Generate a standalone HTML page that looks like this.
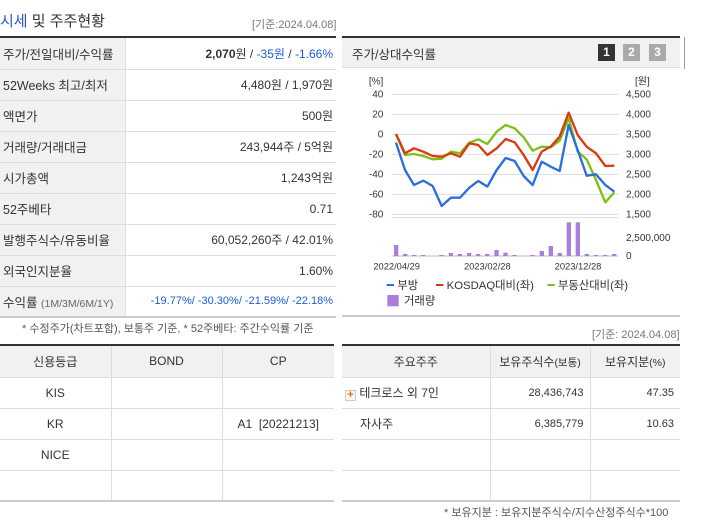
<!DOCTYPE html>
<html><head><meta charset="utf-8"><style>
*{margin:0;padding:0;box-sizing:border-box}
body{width:702px;height:525px;background:#fff;font-family:"Liberation Sans","Noto Sans CJK KR",sans-serif;font-size:12px;color:#333;position:relative;overflow:hidden}
.a{position:absolute}
table{border-collapse:collapse;position:absolute;table-layout:fixed}
td{height:31px;border-bottom:1px solid #ddd;white-space:nowrap}
.st td.l{background:#f1f1f1;border-right:1px solid #ddd;padding-left:3px;font-size:12.5px;color:#333}
.st td.v{text-align:right;padding-right:3px}
.b{color:#1a5ed8}
.g td{border-right:1px solid #ddd;text-align:center}
.g td:last-child{border-right:none}
.g tr.h td{background:#f1f1f1}
</style></head><body>
<div class="a" style="left:0;top:10px;font-size:15px;color:#333"><span style="color:#2a56c6">시세</span> 및 주주현황</div>
<div class="a" style="left:252px;top:16px;font-size:11px;color:#777">[기준:2024.04.08]</div>
<div class="a" style="left:0;top:36px;width:336px;height:2px;background:#333"></div>
<table class="st" style="left:0;top:38px;width:336px">
<col style="width:125px"><col>
<tr><td class="l">주가/전일대비/수익률</td><td class="v"><b>2,070</b>원 / <span class="b">-35원</span> / <span class="b">-1.66%</span></td></tr>
<tr><td class="l">52Weeks 최고/최저</td><td class="v">4,480원 / 1,970원</td></tr>
<tr><td class="l">액면가</td><td class="v">500원</td></tr>
<tr><td class="l">거래량/거래대금</td><td class="v">243,944주 / 5억원</td></tr>
<tr><td class="l">시가총액</td><td class="v">1,243억원</td></tr>
<tr><td class="l">52주베타</td><td class="v">0.71</td></tr>
<tr><td class="l">발행주식수/유동비율</td><td class="v">60,052,260주 / 42.01%</td></tr>
<tr><td class="l">외국인지분율</td><td class="v">1.60%</td></tr>
<tr><td class="l" style="border-bottom:2px solid #ccc">수익률 <span style="font-size:10.5px;color:#666">(1M/3M/6M/1Y)</span></td><td class="v b" style="border-bottom:2px solid #ccc;font-size:11px">-19.77%/ -30.30%/ -21.59%/ -22.18%</td></tr>
</table>
<div class="a" style="left:22px;top:320px;font-size:11px;color:#555">* 수정주가(차트포함), 보통주 기준, * 52주베타: 주간수익률 기준</div>

<div class="a" style="left:342px;top:36px;width:338px;height:2px;background:#333"></div>
<div class="a" style="left:342px;top:38px;width:338px;height:30px;background:#f1f1f1;border-bottom:1px solid #ddd"></div>
<div class="a" style="left:352px;top:44px;font-size:12.5px">주가/상대수익률</div>
<div class="a" style="left:598px;top:44px;width:17px;height:17px;background:#333;color:#fff;font-weight:bold;text-align:center;line-height:17px">1</div>
<div class="a" style="left:623px;top:44px;width:17px;height:17px;background:#aaa;color:#fff;font-weight:bold;text-align:center;line-height:17px">2</div>
<div class="a" style="left:649px;top:44px;width:17px;height:17px;background:#aaa;color:#fff;font-weight:bold;text-align:center;line-height:17px">3</div>
<div class="a" style="left:342px;top:315px;width:338px;height:2px;background:#ccc"></div>
<div class="a" style="left:684px;top:37px;width:1px;height:32px;background:#999"></div>

<svg class="a" style="left:0;top:0" width="702" height="525">
<g transform="translate(340 30) scale(0.33333)" font-family="Liberation Sans" font-size="30" fill="#333">
<g stroke="#ddd" stroke-width="3">
<line x1="155" y1="193" x2="835" y2="193"/><line x1="155" y1="253" x2="835" y2="253"/><line x1="155" y1="313" x2="835" y2="313"/><line x1="155" y1="373" x2="835" y2="373"/><line x1="155" y1="433" x2="835" y2="433"/><line x1="155" y1="493" x2="835" y2="493"/><line x1="155" y1="553" x2="835" y2="553"/>
<line x1="155" y1="563" x2="835" y2="563"/>
<line x1="155" y1="678" x2="835" y2="678" stroke="#bbb"/>
</g>
<g text-anchor="end"><text x="130" y="163">[%]</text><text x="130" y="203">40</text><text x="130" y="263">20</text><text x="130" y="323">0</text><text x="130" y="383">-20</text><text x="130" y="443">-40</text><text x="130" y="503">-60</text><text x="130" y="563">-80</text></g>
<g><text x="885" y="163">[원]</text><text x="858" y="203">4,500</text><text x="858" y="263">4,000</text><text x="858" y="323">3,500</text><text x="858" y="383">3,000</text><text x="858" y="443">2,500</text><text x="858" y="503">2,000</text><text x="858" y="563">1,500</text><text x="858" y="633">2,500,000</text><text x="858" y="687">0</text></g>
<g fill="#a97fdc">
<rect x="162" y="645" width="13" height="33"/><rect x="189" y="672" width="13" height="6"/><rect x="216" y="675" width="13" height="3"/><rect x="243" y="675" width="13" height="3"/><rect x="298" y="675" width="13" height="3"/><rect x="326" y="669" width="13" height="9"/><rect x="353" y="672" width="13" height="6"/><rect x="381" y="669" width="13" height="9"/><rect x="408" y="672" width="13" height="6"/><rect x="435" y="672" width="13" height="6"/><rect x="463" y="660" width="13" height="18"/><rect x="490" y="668" width="13" height="10"/><rect x="517" y="675" width="13" height="3"/><rect x="571" y="675" width="13" height="3"/><rect x="599" y="663" width="13" height="15"/><rect x="626" y="648" width="13" height="30"/><rect x="653" y="669" width="13" height="9"/><rect x="680" y="577" width="13" height="101"/><rect x="707" y="577" width="13" height="101"/><rect x="734" y="672" width="13" height="6"/><rect x="762" y="675" width="13" height="3"/><rect x="789" y="675" width="13" height="3"/><rect x="816" y="672" width="13" height="6"/>
</g>
<g fill="none" stroke-width="7" stroke-linejoin="round">
<polyline stroke="#7fbf1a" points="168,312 195,375 222,372 250,378 278,388 305,386 333,365 360,370 388,338 415,328 442,342 470,305 497,285 524,295 551,322 578,362 605,350 632,352 659,332 686,265 713,365 740,388 768,450 796,517 823,487"/>
<polyline stroke="#d93a10" points="168,312 195,370 222,355 250,365 278,378 305,380 333,370 360,380 388,340 415,345 442,375 470,355 497,327 524,337 551,375 578,420 605,365 632,350 659,320 686,248 713,315 740,350 768,370 796,408 823,407"/>
<polyline stroke="#2a6fdc" points="168,338 195,420 222,465 250,452 278,468 305,528 333,503 360,503 388,473 415,453 442,470 470,420 497,384 524,393 551,438 578,465 605,395 632,410 659,423 686,285 713,360 740,437 768,433 796,465 823,485"/>
</g>
<g text-anchor="middle" font-size="28"><text x="170" y="718">2022/04/29</text><text x="442" y="718">2023/02/28</text><text x="714" y="718">2023/12/28</text></g>
<g font-size="34">
<rect x="140" y="762" width="22" height="6" fill="#2a6fdc"/><text x="172" y="777">부방</text>
<rect x="288" y="762" width="22" height="6" fill="#d93a10"/><text x="320" y="777">KOSDAQ대비(좌)</text>
<rect x="622" y="762" width="22" height="6" fill="#7fbf1a"/><text x="654" y="777">부동산대비(좌)</text>
<rect x="142" y="795" width="34" height="34" fill="#a97fdc"/><text x="192" y="823">거래량</text>
</g>
</g>
</svg>

<div class="a" style="left:592px;top:326px;font-size:11px;color:#777">[기준: 2024.04.08]</div>

<div class="a" style="left:0;top:344px;width:334px;height:2px;background:#333"></div>
<table class="g" style="left:0;top:346px;width:334px">
<col style="width:111px"><col style="width:111px"><col>
<tr class="h"><td>신용등급</td><td>BOND</td><td>CP</td></tr>
<tr><td>KIS</td><td></td><td></td></tr>
<tr><td>KR</td><td></td><td>A1 &nbsp;[20221213]</td></tr>
<tr><td>NICE</td><td></td><td></td></tr>
<tr><td style="border-bottom:2px solid #ccc"></td><td style="border-bottom:2px solid #ccc"></td><td style="border-bottom:2px solid #ccc"></td></tr>
</table>

<div class="a" style="left:342px;top:344px;width:338px;height:2px;background:#333"></div>
<table class="g" style="left:342px;top:346px;width:338px">
<col style="width:148px"><col style="width:100px"><col style="width:90px">
<tr class="h"><td>주요주주</td><td>보유주식수<span style="font-size:10.5px">(보통)</span></td><td>보유지분<span style="font-size:10.5px">(%)</span></td></tr>
<tr><td style="text-align:left;padding-left:3px"><span style="display:inline-block;width:11px;height:11px;border:1px solid #ccc;background:#f6f6f6;color:#f60;font-size:11px;line-height:9px;text-align:center;font-weight:bold;vertical-align:-1px">+</span> 테크로스 외 7인</td><td style="text-align:right;padding-right:6px;font-size:11px">28,436,743</td><td style="text-align:right;padding-right:6px;font-size:11px">47.35</td></tr>
<tr><td style="text-align:left;padding-left:18px">자사주</td><td style="text-align:right;padding-right:6px;font-size:11px">6,385,779</td><td style="text-align:right;padding-right:6px;font-size:11px">10.63</td></tr>
<tr><td></td><td></td><td></td></tr>
<tr><td style="border-bottom:2px solid #ccc"></td><td style="border-bottom:2px solid #ccc"></td><td style="border-bottom:2px solid #ccc"></td></tr>
</table>
<div class="a" style="left:444px;top:504px;font-size:11px;color:#555">* 보유지분 : 보유지분주식수/지수산정주식수*100</div>
</body></html>
